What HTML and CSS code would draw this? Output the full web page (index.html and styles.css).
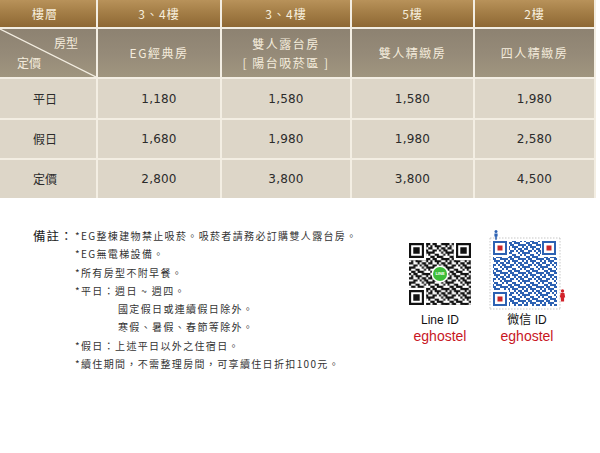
FILE: index.html
```html
<!DOCTYPE html>
<html lang="zh-TW">
<head>
<meta charset="utf-8">
<title>EG Hostel 房價表</title>
<link rel="stylesheet" href="styles.css">
</head>
<body>
<div class="price">
  <div class="cell h1">樓層</div>
  <div class="cell h1">3、4樓</div>
  <div class="cell h1">3、4樓</div>
  <div class="cell h1">5樓</div>
  <div class="cell h1">2樓</div>

  <div class="cell h2 diag">
    <span class="t-type">房型</span>
    <span class="t-price">定價</span>
    <svg class="diag-line" viewBox="0 0 100 100" preserveAspectRatio="none"><line x1="0" y1="0" x2="100" y2="100" stroke="#f4eee2" stroke-width="1.2" vector-effect="non-scaling-stroke"/></svg>
  </div>
  <div class="cell h2">EG經典房</div>
  <div class="cell h2 two">雙人露台房<br>[ 陽台吸菸區 ]</div>
  <div class="cell h2">雙人精緻房</div>
  <div class="cell h2">四人精緻房</div>

  <div class="cell lbl">平日</div>
  <div class="cell num">1,180</div>
  <div class="cell num">1,580</div>
  <div class="cell num">1,580</div>
  <div class="cell num">1,980</div>

  <div class="cell lbl">假日</div>
  <div class="cell num">1,680</div>
  <div class="cell num">1,980</div>
  <div class="cell num">1,980</div>
  <div class="cell num">2,580</div>

  <div class="cell lbl">定價</div>
  <div class="cell num">2,800</div>
  <div class="cell num">3,800</div>
  <div class="cell num">3,800</div>
  <div class="cell num">4,500</div>
</div>

<div class="info">
  <div class="notes-label">備註：</div>
  <ul class="notes">
    <li>*EG整棟建物禁止吸菸。吸菸者請務必訂購雙人露台房。</li>
    <li>*EG無電梯設備。</li>
    <li>*所有房型不附早餐。</li>
    <li>*平日：週日 ~ 週四。</li>
    <li class="indent">國定假日或連續假日除外。</li>
    <li class="indent">寒假、暑假、春節等除外。</li>
    <li>*假日：上述平日以外之住宿日。</li>
    <li>*續住期間，不需整理房間，可享續住日折扣100元。</li>
  </ul>
  <div class="qr-group">
    <div class="qr-col line-col">
      <div class="qr-art">
        <svg class="qr-line" width="62" height="62" viewBox="0 0 29 29">
          <defs>
            <pattern id="bitsA" width="9" height="7" patternUnits="userSpaceOnUse">
              <path fill="#111" d="M0 0h1v1h-1zM2 0h2v1h-2zM6 0h3v1h-3zM1 1h1v1h-1zM3 1h3v1h-3zM8 1h1v1h-1zM0 2h2v1h-2zM4 2h1v1h-1zM6 2h2v1h-2zM2 3h2v1h-2zM5 3h1v1h-1zM7 3h2v1h-2zM0 4h3v1h-3zM6 4h1v1h-1zM8 4h1v1h-1zM0 5h1v1h-1zM3 5h2v1h-2zM7 5h1v1h-1zM1 6h2v1h-2zM4 6h3v1h-3z"/>
            </pattern>
          </defs>
          <rect width="29" height="29" fill="#fff"/>
          <rect width="29" height="29" fill="url(#bitsA)"/>
          <rect x="0" y="0" width="8" height="8" fill="#fff"/>
          <rect x="21" y="0" width="8" height="8" fill="#fff"/>
          <rect x="0" y="21" width="8" height="8" fill="#fff"/>
          <path fill="#111" fill-rule="evenodd" d="M0 0h7v7h-7zM1 1v5h5v-5zM2 2h3v3h-3zM22 0h7v7h-7zM23 1v5h5v-5zM24 2h3v3h-3zM0 22h7v7h-7zM1 23v5h5v-5zM2 24h3v3h-3z"/>
          <circle cx="14.5" cy="14.5" r="4" fill="#fff"/>
          <circle cx="14.5" cy="14.5" r="3.3" fill="#3dbd3a"/>
          <text x="14.5" y="15.2" font-size="1.9" font-family="Liberation Sans, sans-serif" font-weight="bold" fill="#fff" text-anchor="middle">LINE</text>
        </svg>
      </div>
      <div class="qr-name">Line ID</div>
      <div class="qr-id">eghostel</div>
    </div>
    <div class="qr-col wechat-col">
      <div class="qr-art">
        <svg class="qr-wechat" width="78" height="80" viewBox="0 0 78 80">
          <defs>
            <pattern id="bitsB" width="18" height="14" patternUnits="userSpaceOnUse">
              <path fill="#2d62b3" d="M0 0h2v2h-2zM4 0h4v2h-4zM12 0h6v2h-6zM2 2h2v2h-2zM6 2h6v2h-6zM16 2h2v2h-2zM0 4h4v2h-4zM8 4h2v2h-2zM12 4h4v2h-4zM4 6h4v2h-4zM10 6h2v2h-2zM14 6h4v2h-4zM0 8h6v2h-6zM12 8h2v2h-2zM16 8h2v2h-2zM0 10h2v2h-2zM6 10h4v2h-4zM14 10h2v2h-2zM2 12h4v2h-4zM8 12h6v2h-6z"/>
            </pattern>
          </defs>
          <g stroke="#b9b9b9" stroke-width="0.8" stroke-dasharray="1.5 1.5" fill="none">
            <line x1="2" y1="8" x2="72" y2="8"/>
            <line x1="2" y1="79" x2="72" y2="79"/>
            <line x1="2" y1="8" x2="2" y2="79"/>
            <line x1="72" y1="8" x2="72" y2="79"/>
          </g>
          <rect x="5" y="11" width="64" height="65" fill="url(#bitsB)"/>
          <rect x="5" y="11" width="16" height="16" fill="#fff"/>
          <rect x="53" y="11" width="16" height="16" fill="#fff"/>
          <rect x="5" y="60" width="16" height="16" fill="#fff"/>
          <g fill="none" stroke="#2d62b3" stroke-width="2">
            <rect x="6" y="12" width="12" height="12"/>
            <rect x="55" y="12" width="12" height="12"/>
            <rect x="6" y="63" width="12" height="12"/>
          </g>
          <g fill="#c9262b">
            <rect x="9.5" y="15.5" width="5" height="5"/>
            <rect x="58.5" y="15.5" width="5" height="5"/>
            <rect x="9.5" y="66.5" width="5" height="5"/>
          </g>
          <g fill="#2d62b3">
            <circle cx="8" cy="1.6" r="1.5"/>
            <path d="M6.4 3.4h3.2v3.2h-0.8v3.2h-1.6v-3.2h-0.8z"/>
          </g>
          <g fill="#d2232a">
            <circle cx="74.5" cy="61" r="1.7"/>
            <path d="M72.6 63h3.8l0.8 4.5h-1.1v4h-3.2v-4h-1.1z"/>
          </g>
        </svg>
      </div>
      <div class="qr-name">微信 ID</div>
      <div class="qr-id">eghostel</div>
    </div>
  </div>
</div>
</body>
</html>
```

FILE: styles.css
```css
html, body {
  margin: 0;
  padding: 0;
  background: #ffffff;
}

body {
  width: 600px;
  height: 453px;
  overflow: hidden;
  font-family: "Noto Sans CJK TC", "Liberation Sans", sans-serif;
}

.price {
  display: grid;
  grid-template-columns: 96px 122px 128px 121px 119px;
  grid-template-rows: 27px 48px 39px 38px 38px;
  gap: 2px;
  width: 594px;
  padding-right: 2px;
  background: #f3eee3;
}

.cell {
  display: flex;
  align-items: center;
  justify-content: center;
  text-align: center;
  font-size: 12px;
  line-height: 16px;
}

.h1 {
  background: linear-gradient(180deg, #b8925a 0%, #a47e47 45%, #8e6833 100%);
  color: #f6eedc;
  letter-spacing: 1px;
}

.price .h1:first-child {
  padding-right: 6px;
}

.h2 {
  background: linear-gradient(180deg, #8d8271 0%, #958a78 50%, #a0967f 100%);
  color: #f4ecdc;
  letter-spacing: 1.5px;
}

.h2.two {
  line-height: 19px;
}

.diag {
  position: relative;
  flex-direction: column;
  align-items: stretch;
  justify-content: flex-start;
  padding: 6px 18px 0 17px;
  letter-spacing: 0;
}

.t-type {
  align-self: flex-end;
}

.t-price {
  align-self: flex-start;
  margin-top: 4px;
}

.diag-line {
  position: absolute;
  left: 0;
  top: 0;
  width: 100%;
  height: 100%;
}

.lbl {
  background: #ddd6c8;
  color: #2b2b2b;
  padding-right: 6px;
}

.num {
  background: #ddd6c8;
  color: #2b2b2b;
  font-family: "DejaVu Sans", "Noto Sans CJK TC", sans-serif;
  font-size: 12px;
  letter-spacing: 0.2px;
}

.info {
  display: flex;
  align-items: flex-start;
  padding: 29px 0 0 33px;
}

.notes-label {
  width: 42px;
  font-size: 12.5px;
  line-height: 18.3px;
  letter-spacing: 1px;
  color: #222;
}

.notes {
  list-style: none;
  margin: 0;
  padding: 0;
  width: 333px;
  font-family: "Noto Sans CJK TC", "Liberation Sans", sans-serif;
  font-size: 10px;
  line-height: 18.3px;
  letter-spacing: 1.35px;
  color: #333;
}

.notes .indent {
  padding-left: 43px;
}

.qr-group {
  display: flex;
  align-items: flex-start;
  gap: 16px;
  margin-top: 3px;
}

.qr-col {
  display: flex;
  flex-direction: column;
  align-items: center;
}

.line-col {
  width: 64px;
}

.wechat-col {
  width: 78px;
}

.qr-art {
  height: 80px;
  display: flex;
  justify-content: center;
}

.qr-line {
  margin-top: 13px;
}

.qr-name {
  margin-top: 3px;
  font-family: "Liberation Sans", "Noto Sans CJK TC", sans-serif;
  font-size: 12px;
  line-height: 15px;
  color: #111;
}

.qr-id {
  font-family: "Liberation Sans", sans-serif;
  font-size: 14px;
  line-height: 16px;
  color: #c8161f;
}
```
